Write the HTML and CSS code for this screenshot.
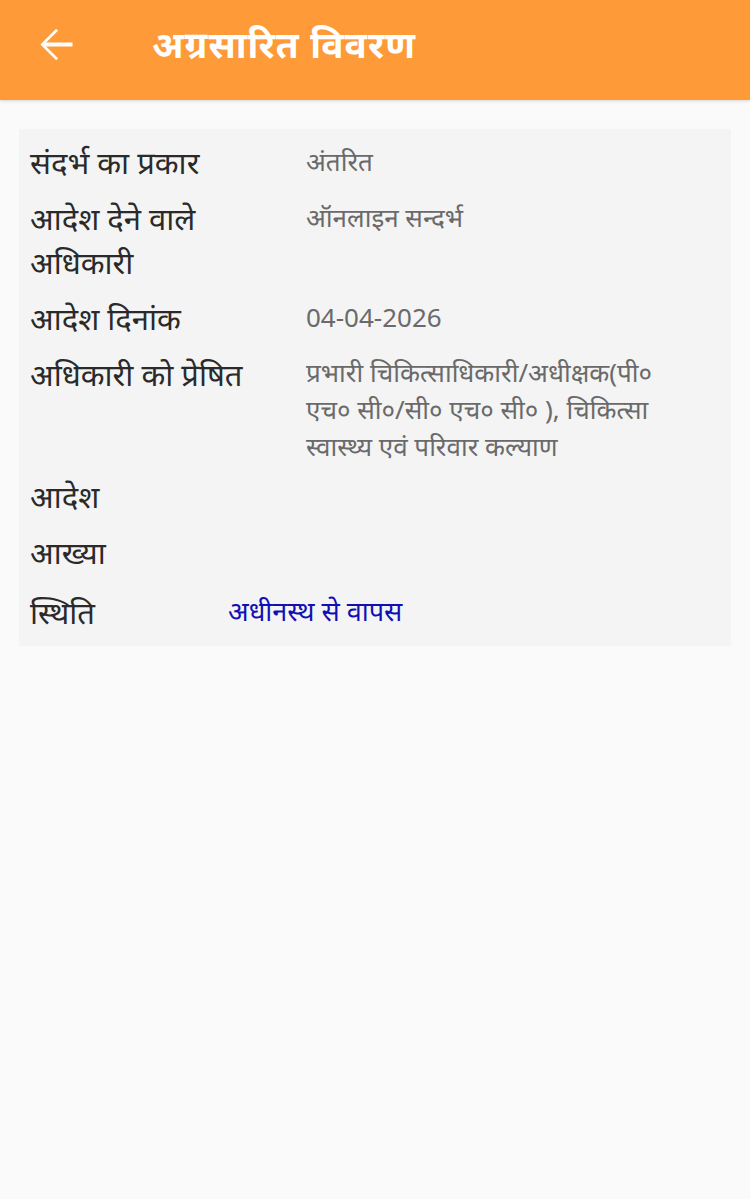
FILE: index.html
```html
<!DOCTYPE html>
<html lang="hi">
<head>
    <meta charset="UTF-8">
    <meta name="viewport" content="width=device-width, initial-scale=1.0">
    <title>अग्रसारित विवरण</title>
    <link rel="stylesheet" href="styles.css">
</head>
<body>
    <header class="toolbar">
        <span class="back-btn">
            <svg width="51" height="51" viewBox="0 0 24 24"><path fill="#fff" d="M20 11.1H7.6l5.6-5.6L12.3 4.6 4.9 12l7.4 7.4 0.9-0.9-5.6-5.6H20z"/></svg>
        </span>
        <h1 class="title">अग्रसारित विवरण</h1>
    </header>

    <div class="card">
        <div class="row">
            <div class="label">संदर्भ का प्रकार</div>
            <div class="value">अंतरित</div>
        </div>
        <div class="row">
            <div class="label">आदेश देने वाले अधिकारी</div>
            <div class="value">ऑनलाइन सन्दर्भ</div>
        </div>
        <div class="row">
            <div class="label">आदेश दिनांक</div>
            <div class="value">04-04-2026</div>
        </div>
        <div class="row">
            <div class="label">अधिकारी को प्रेषित</div>
            <div class="value multi">प्रभारी चिकित्साधिकारी/अधीक्षक(पी० एच० सी०/सी० एच० सी० ), चिकित्सा स्वास्थ्य एवं परिवार कल्याण</div>
        </div>
        <div class="row">
            <div class="label">आदेश</div>
            <div class="value"></div>
        </div>
        <div class="row">
            <div class="label">आख्या</div>
            <div class="value"></div>
        </div>
        <div class="row status-row">
            <div class="label short">स्थिति</div>
            <div class="value status">अधीनस्थ से वापस</div>
        </div>
    </div>
</body>
</html>
```

FILE: styles.css
```css
* {
    margin: 0;
    padding: 0;
    box-sizing: border-box;
}

body {
    font-family: 'Noto Sans', 'Roboto', sans-serif;
    background: #fafafa;
    min-height: 100vh;
}

.toolbar {
    height: 100px;
    background: #fe9a37;
    display: flex;
    align-items: center;
    padding-left: 30px;
    box-shadow: 0 1px 3px rgba(0, 0, 0, 0.15);
}

.back-btn {
    display: flex;
    width: 51px;
    height: 51px;
    margin-top: -11px;
}

.title {
    color: #fff;
    font-size: 37px;
    font-weight: bold;
    letter-spacing: 1px;
    margin-left: 71px;
    margin-top: -13px;
}

.card {
    margin: 29px 19px 0;
    background: #f4f4f4;
    padding: 5px 11px 6px;
}

.row {
    display: flex;
    padding: 6px 0;
}

.status-row {
    padding-top: 10px;
}

.label {
    width: 276px;
    flex-shrink: 0;
    font-size: 31px;
    line-height: 44px;
    color: #2a2a2a;
    padding-right: 20px;
}

.label.short {
    width: 198px;
}

.value {
    flex: 1;
    font-size: 26px;
    line-height: 36px;
    color: #6a6a6a;
    padding-top: 3px;
    padding-right: 20px;
}

.value.multi {
    line-height: 37px;
    padding-top: 2px;
    margin-bottom: -3px;
}

.value.status {
    font-size: 27px;
    color: #1010b4;
}
```
